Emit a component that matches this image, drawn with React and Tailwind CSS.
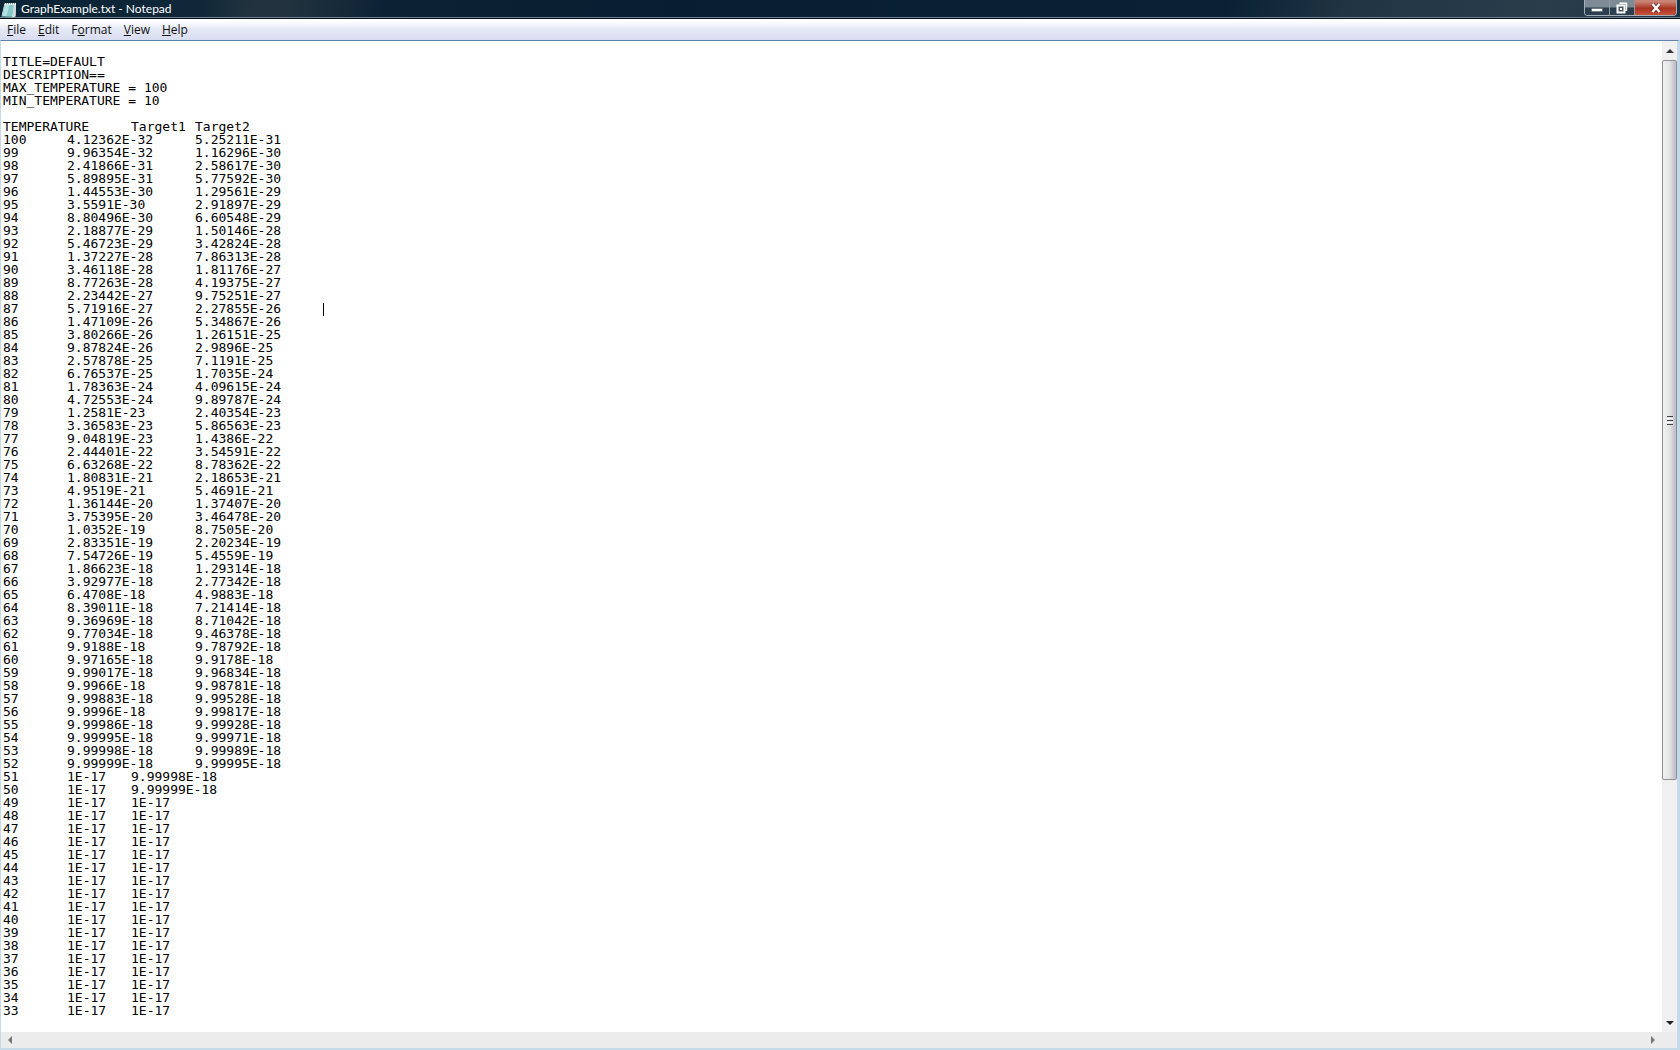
import { useState } from 'react';

const rows = [
  [100, '4.12362E-32', '5.25211E-31'],
  [99, '9.96354E-32', '1.16296E-30'],
  [98, '2.41866E-31', '2.58617E-30'],
  [97, '5.89895E-31', '5.77592E-30'],
  [96, '1.44553E-30', '1.29561E-29'],
  [95, '3.5591E-30', '2.91897E-29'],
  [94, '8.80496E-30', '6.60548E-29'],
  [93, '2.18877E-29', '1.50146E-28'],
  [92, '5.46723E-29', '3.42824E-28'],
  [91, '1.37227E-28', '7.86313E-28'],
  [90, '3.46118E-28', '1.81176E-27'],
  [89, '8.77263E-28', '4.19375E-27'],
  [88, '2.23442E-27', '9.75251E-27'],
  [87, '5.71916E-27', '2.27855E-26'],
  [86, '1.47109E-26', '5.34867E-26'],
  [85, '3.80266E-26', '1.26151E-25'],
  [84, '9.87824E-26', '2.9896E-25'],
  [83, '2.57878E-25', '7.1191E-25'],
  [82, '6.76537E-25', '1.7035E-24'],
  [81, '1.78363E-24', '4.09615E-24'],
  [80, '4.72553E-24', '9.89787E-24'],
  [79, '1.2581E-23', '2.40354E-23'],
  [78, '3.36583E-23', '5.86563E-23'],
  [77, '9.04819E-23', '1.4386E-22'],
  [76, '2.44401E-22', '3.54591E-22'],
  [75, '6.63268E-22', '8.78362E-22'],
  [74, '1.80831E-21', '2.18653E-21'],
  [73, '4.9519E-21', '5.4691E-21'],
  [72, '1.36144E-20', '1.37407E-20'],
  [71, '3.75395E-20', '3.46478E-20'],
  [70, '1.0352E-19', '8.7505E-20'],
  [69, '2.83351E-19', '2.20234E-19'],
  [68, '7.54726E-19', '5.4559E-19'],
  [67, '1.86623E-18', '1.29314E-18'],
  [66, '3.92977E-18', '2.77342E-18'],
  [65, '6.4708E-18', '4.9883E-18'],
  [64, '8.39011E-18', '7.21414E-18'],
  [63, '9.36969E-18', '8.71042E-18'],
  [62, '9.77034E-18', '9.46378E-18'],
  [61, '9.9188E-18', '9.78792E-18'],
  [60, '9.97165E-18', '9.9178E-18'],
  [59, '9.99017E-18', '9.96834E-18'],
  [58, '9.9966E-18', '9.98781E-18'],
  [57, '9.99883E-18', '9.99528E-18'],
  [56, '9.9996E-18', '9.99817E-18'],
  [55, '9.99986E-18', '9.99928E-18'],
  [54, '9.99995E-18', '9.99971E-18'],
  [53, '9.99998E-18', '9.99989E-18'],
  [52, '9.99999E-18', '9.99995E-18'],
  [51, '1E-17', '9.99998E-18'],
  [50, '1E-17', '9.99999E-18'],
];

// everything below 50 is flat
for (let t = 49; t >= 33; t--) {
  rows.push([t, '1E-17', '1E-17']);
}

const fileText = [
  '',
  'TITLE=DEFAULT',
  'DESCRIPTION==',
  'MAX_TEMPERATURE = 100',
  'MIN_TEMPERATURE = 10',
  '',
  'TEMPERATURE\tTarget1\tTarget2',
  ...rows.map((row) => row.join('\t')),
].join('\n');

const menus = [
  { before: '', key: 'F', after: 'ile' },
  { before: '', key: 'E', after: 'dit' },
  { before: 'F', key: 'o', after: 'rmat' },
  { before: '', key: 'V', after: 'iew' },
  { before: '', key: 'H', after: 'elp' },
];

const NotepadIcon = () => (
  <svg width="16" height="17" viewBox="0 0 16 17" aria-hidden="true">
    <path d="M3.5 2.5 L15 2.5 L14.5 15.5 L12 16.5 L0.5 15.5 Z" fill="#e8f3f2" />
    <path d="M3.5 3.5 L13 3.5 L11.5 15.5 L1 15 Z" fill="#86c8cb" />
    <path d="M4 3.5 L8.5 3.5 L5.5 15 L1.5 15 Z" fill="#b5e0df" />
    <path d="M13 3.5 L15 3 L14.5 15 L11.5 15.5 Z" fill="#cfdcda" />
    <path d="M4.5 2v2M6.5 2v2M8.5 2v2M10.5 2v2M12.5 2v2M14.5 2v2" stroke="#f2f7f6" strokeWidth="1" />
    <path d="M1 15.5 L11.5 16" stroke="#4f8790" strokeWidth="1" />
  </svg>
);

const Arrow = ({ points, className }) => (
  <svg width="8" height="8" viewBox="0 0 8 8" className={className} aria-hidden="true">
    <polygon points={points} fill="currentColor" />
  </svg>
);

const TitleBar = () => (
  <header className="flex h-[19px] items-start justify-between border-b border-[#050d18] bg-[linear-gradient(100deg,#0b2536_0%,#0f2738_12%,#22333f_15%,#22333f_17%,#0c2234_23%,#081d31_40%,#0a2135_73%,#203443_80%,#2a3d4b_92%,#1d3344_100%)] shadow-[inset_0_-1px_0_#6f8291]">
    <div className="flex h-full items-center gap-1 pl-px">
      <NotepadIcon />
      <h1 className="font-['Lato',sans-serif] text-xs text-white">GraphExample.txt - Notepad</h1>
    </div>
    <div className="mr-[3px] flex h-4 overflow-hidden rounded-b border border-t-0 border-[#a3b0ba]">
      <button
        aria-label="Minimize"
        className="flex w-[25px] items-center justify-center border-r border-[#8d9aa5] bg-linear-to-b from-[#7f8b94] from-45% to-[#2b3f4e] to-55%"
      >
        <svg width="12" height="12" viewBox="0 0 12 12">
          <rect x="0.5" y="6.5" width="11" height="3" fill="#fff" stroke="#4a5661" strokeWidth="0.5" />
        </svg>
      </button>
      <button
        aria-label="Restore"
        className="flex w-[25px] items-center justify-center border-r border-[#8d9aa5] bg-linear-to-b from-[#7f8b94] from-45% to-[#2b3f4e] to-55%"
      >
        <svg width="12" height="12" viewBox="0 0 12 12">
          <path d="M3.5 1.2h7v7h-2" fill="none" stroke="#fff" strokeWidth="1.4" />
          <rect x="1.5" y="3.5" width="7" height="7" fill="#455462" stroke="#fff" strokeWidth="2" />
          <rect x="4" y="6" width="2" height="2" fill="#fff" />
        </svg>
      </button>
      <button
        aria-label="Close"
        className="flex w-[41px] items-center justify-center bg-linear-to-b from-[#c98475] from-10% via-[#a93322] via-55% to-[#c9523a]"
      >
        <svg width="12" height="12" viewBox="0 0 12 12">
          <path d="M2.5 2l7 8M9.5 2l-7 8" stroke="#5b2a25" strokeWidth="4" />
          <path d="M2.5 2l7 8M9.5 2l-7 8" stroke="#fff" strokeWidth="2.5" />
        </svg>
      </button>
    </div>
  </header>
);

const MenuBar = () => (
  <nav className="flex h-[21px] items-center bg-linear-to-b from-white from-10% via-[#e4e8f5] via-50% to-[#d8dcf0] pl-px text-xs text-[#111]">
    {menus.map((menu) => (
      <button key={menu.key} className="px-[6px]">
        {menu.before}
        <span className="underline">{menu.key}</span>
        {menu.after}
      </button>
    ))}
  </nav>
);

const VerticalScrollbar = () => (
  <div className="flex w-[15px] flex-col bg-[#f0f0f0]">
    <button aria-label="Scroll up" className="flex h-[19px] items-center justify-center text-[#333]">
      <Arrow points="0,6 4,2 8,6" />
    </button>
    <div className="flex flex-[720] flex-col items-center justify-center gap-px rounded-xs border border-[#8f9095] bg-linear-to-r from-[#f3f3f3] via-[#e3e4e6] to-[#bdb9c6]">
      <span className="h-px w-[6px] bg-[#444]" />
      <span className="h-px w-[6px] bg-white" />
      <span className="h-px w-[6px] bg-[#444]" />
      <span className="h-px w-[6px] bg-white" />
      <span className="h-px w-[6px] bg-[#444]" />
    </div>
    <div className="flex-[234]" />
    <button aria-label="Scroll down" className="flex h-[18px] items-center justify-center text-[#222]">
      <Arrow points="0,2 8,2 4,6" />
    </button>
  </div>
);

const HorizontalScrollbar = () => (
  <div className="flex h-4 items-center justify-between bg-[#ececec] pl-[5px] pr-5 text-[#777]">
    <button aria-label="Scroll left">
      <Arrow points="6,0 2,4 6,8" />
    </button>
    <button aria-label="Scroll right">
      <Arrow points="2,0 6,4 2,8" />
    </button>
  </div>
);

export default function App() {
  const [text, setText] = useState(fileText);

  return (
    <div className="flex h-screen flex-col overflow-hidden bg-white font-['Open_Sans','Noto_Sans',sans-serif]">
      <TitleBar />
      <MenuBar />
      <main className="flex min-h-0 flex-1 flex-col border border-r-3 border-b-2 border-[#c3dae8] border-t-[#5f83a8]">
        <div className="relative flex min-h-0 flex-1">
          <textarea
            aria-label="Document"
            value={text}
            onChange={(e) => setText(e.target.value)}
            wrap="off"
            spellCheck={false}
            className="flex-1 resize-none overflow-hidden bg-white pt-px pl-[2px] font-['DejaVu_Sans_Mono',monospace] text-[13px] leading-[13px] text-black outline-none [tab-size:64px]"
          />
          {/* text pointer */}
          <span className="pointer-events-none absolute top-[262px] left-[322px] h-[13px] w-px bg-black" />
          <VerticalScrollbar />
        </div>
        <HorizontalScrollbar />
      </main>
    </div>
  );
}
